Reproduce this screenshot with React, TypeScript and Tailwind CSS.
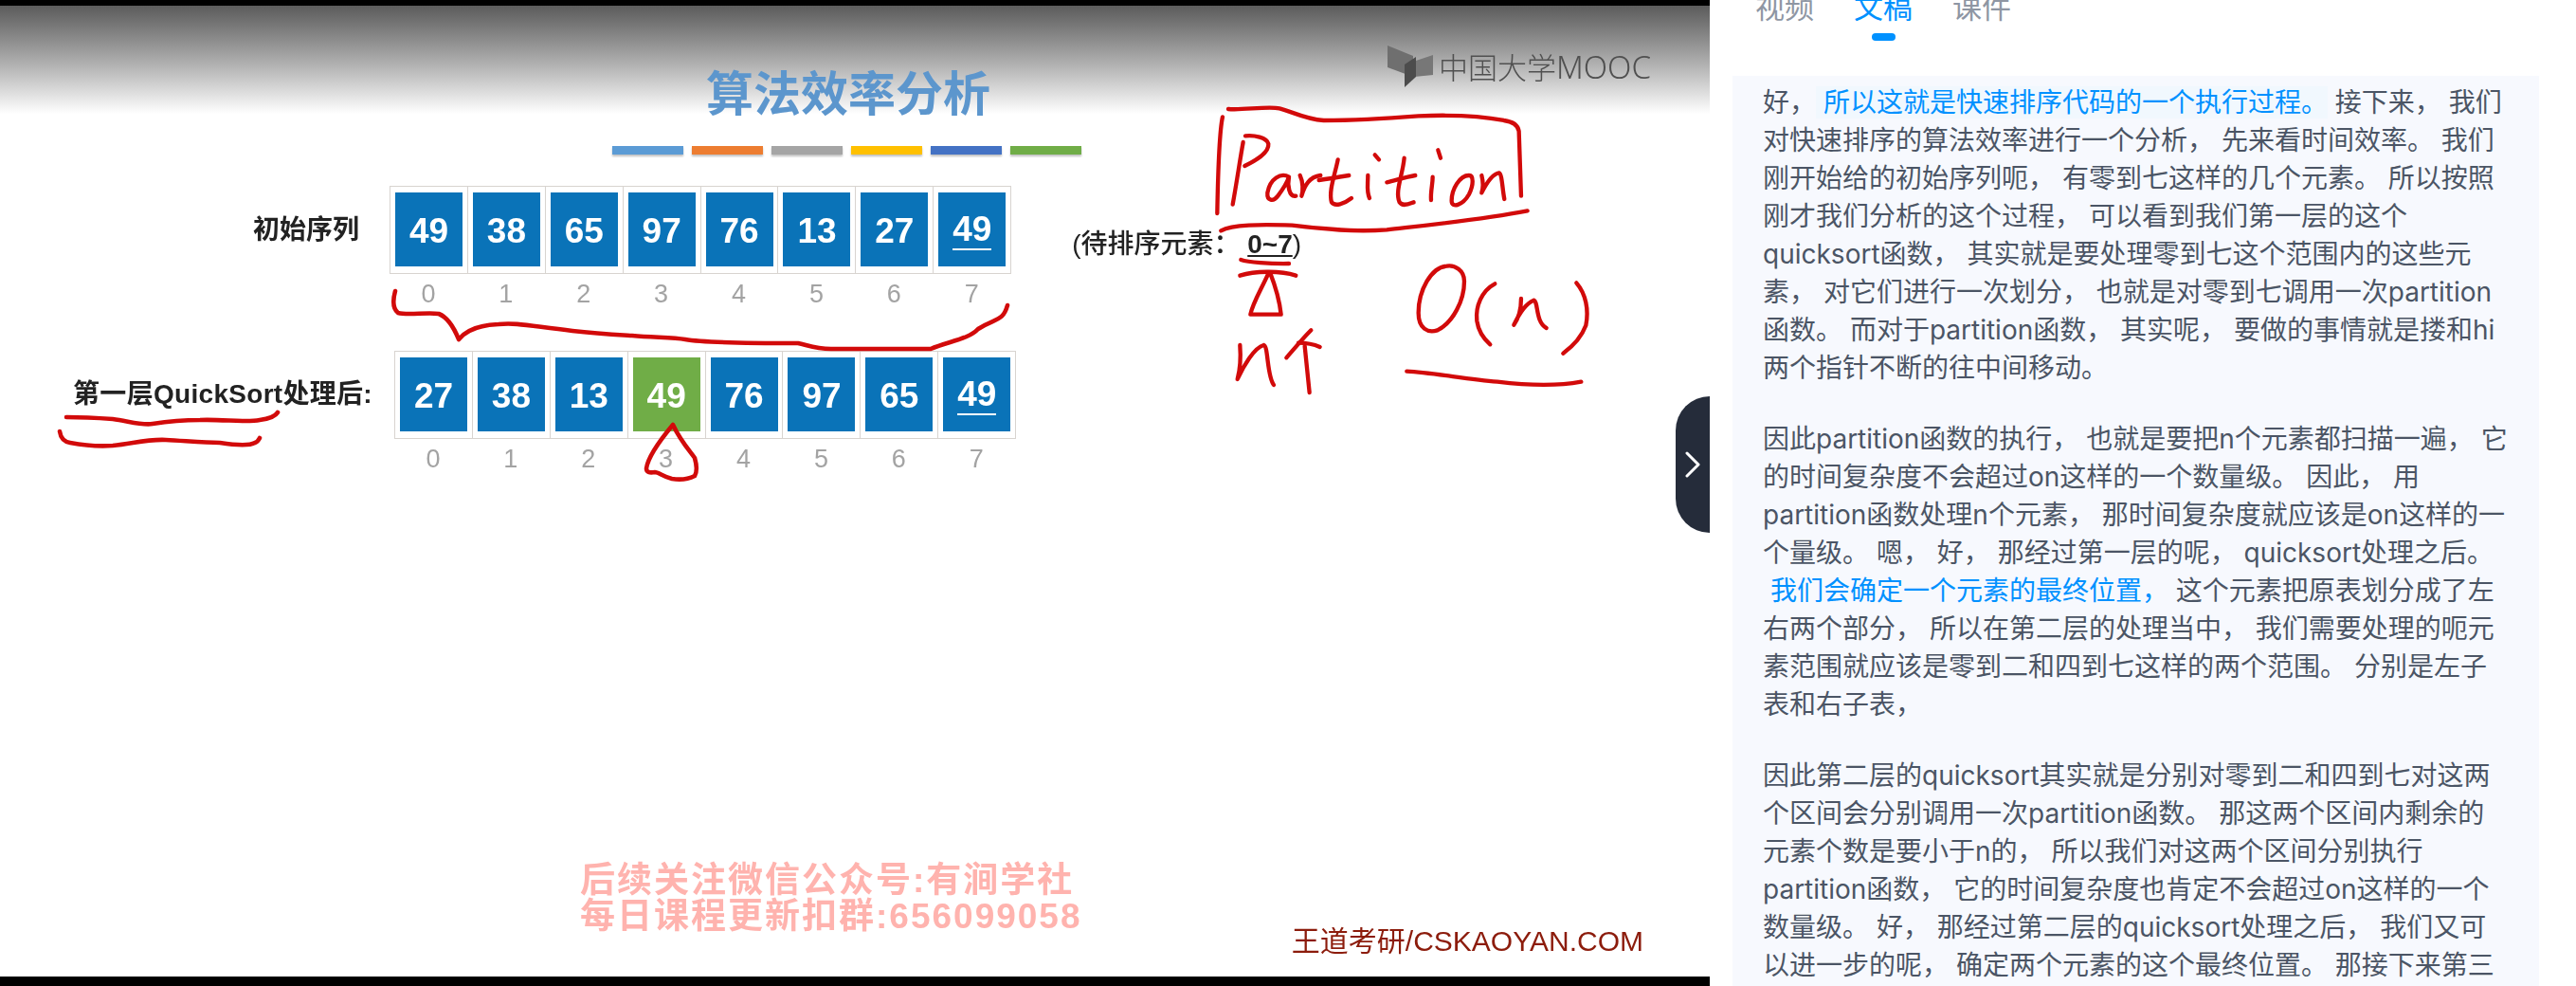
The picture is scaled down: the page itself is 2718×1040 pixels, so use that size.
import { ChevronRight } from "lucide-react";

const barColors = ["bg-[#5b9bd5]", "bg-[#ed7d31]", "bg-[#a5a5a5]", "bg-[#ffc000]", "bg-[#4472c4]", "bg-[#70ad47]"];
const firstRow = ["49", "38", "65", "97", "76", "13", "27", "49"];
const secondRow = ["27", "38", "13", "49", "76", "97", "65", "49"];
const indexes = ["0", "1", "2", "3", "4", "5", "6", "7"];

function ArrayCells({ values, pivot }: { values: string[]; pivot?: number }) {
	return (
		<div className="flex border-y border-l border-[#d8d4d0] bg-white">
			{values.map((value, i) => (
				<div key={i} className="w-[81.9px] h-[91px] pl-[5px] pr-[5px] pt-[6px] pb-[5px] border-r border-[#d8d4d0]">
					<div
						className={`w-[71px] h-[78px] flex items-center justify-center pt-[2px] text-white text-[37px] font-bold leading-none ${
							i === pivot ? "bg-[#70ad47]" : "bg-[#0a73b8]"
						}`}
					>
						<span className={i === 7 ? "border-b-2 border-white pb-[2px]" : ""}>{value}</span>
					</div>
				</div>
			))}
		</div>
	);
}

function IndexRow() {
	return (
		<div className="flex h-[36px] items-center text-[27px] text-[#a3a3a3]">
			{indexes.map((n) => (
				<div key={n} className="w-[81.9px] text-center">
					{n}
				</div>
			))}
		</div>
	);
}

function Annotations() {
	return (
		<svg
			className="absolute left-0 top-0 pointer-events-none"
			width="1804"
			height="1040"
			fill="none"
			stroke="#d20a0a"
			strokeLinecap="round"
			strokeLinejoin="round"
		>
			<g strokeWidth="4.6">
				<path d="M417 307C414 318 415 326 420 330C430 333 450 329 463 331C473 335 480 348 484 358C492 348 505 343 526 342C545 340 560 344 604 349C630 352 650 353 667 354C690 356 710 356 723 358C745 362 800 362 842 362C852 364 860 368 877 368L982 368C1000 360 1022 358 1032 347C1050 335 1058 340 1063 322" />
				<path d="M70 440C90 440 105 441 119 442C135 444 150 449 161 447C180 444 195 443 211 443C235 442 260 446 274 443C282 442 290 440 293 435" />
				<path d="M63 455C64 462 68 466 74 467C90 470 105 471 119 470C140 468 155 463 175 464C195 465 215 467 232 467C245 469 262 471 269 467C272 466 273 464 274 462" />
				<path d="M710 448C718 465 728 476 733 483C735 490 736 497 733 502C725 506 715 506 709 505C700 503 695 498 691 498C685 499 682 498 682 494C684 480 700 460 710 448Z" />
			</g>
			<g transform="translate(1280 105) scale(0.3333)" strokeWidth="13">
				<path d="M48 30C90 35 170 20 210 28C250 38 290 62 350 66C450 66 550 60 650 52C750 48 850 52 920 66C950 70 965 80 968 100L975 305" />
				<path d="M30 55C20 100 15 250 13 360" />
				<path d="M25 415C60 395 150 395 250 398C350 410 450 420 550 412C700 395 850 380 995 352" />
				<path d="M95 135C85 190 75 260 62 332" />
				<path d="M102 115C130 112 170 120 175 140C178 170 130 195 100 210" />
				<path d="M240 245C215 230 180 250 172 295C170 320 190 325 205 305C220 285 235 260 240 245C235 270 240 310 262 305" />
				<path d="M275 240C285 260 285 290 280 305C290 270 305 245 340 240" />
				<path d="M395 190C385 240 365 290 375 325C385 340 415 330 438 312" />
				<path d="M335 255C370 250 400 245 430 240" />
				<path d="M490 240C490 270 485 290 495 312" />
				<path d="M512 175L525 190" />
				<path d="M605 185C600 240 575 290 590 325C600 340 620 330 635 325" />
				<path d="M550 262C580 255 610 245 640 240" />
				<path d="M695 245C695 270 688 290 690 318" />
				<path d="M712 160L720 185" />
				<path d="M810 240C780 240 755 285 755 320C755 345 790 335 810 300C825 270 825 240 810 240" />
				<path d="M850 240C855 260 855 280 850 295C865 265 885 235 905 232C915 235 915 280 922 315" />
			</g>
			<g transform="translate(1280 250) scale(0.3333)" strokeWidth="13">
				<path d="M88 72C110 80 180 85 240 84" />
				<path d="M85 122C130 108 210 105 262 122" />
				<path d="M175 115C150 170 125 210 118 245L215 245C210 200 195 150 180 112" />
				<path d="M85 342C88 380 85 420 77 450C95 410 130 350 160 342C175 345 170 440 192 468" />
				<path d="M232 382C260 350 285 320 310 295" />
				<path d="M270 335C295 335 320 340 338 348" />
				<path d="M290 345C295 390 300 440 305 492" />
				<path d="M740 92C690 95 650 170 650 240C650 290 680 305 710 295C760 270 795 200 795 140C795 105 765 88 740 92" />
				<path d="M892 148C850 170 830 220 835 265C840 300 860 325 877 340" />
				<path d="M975 195C975 230 965 260 952 278C970 240 990 210 1015 200C1030 205 1020 270 1055 288" />
				<path d="M1150 145C1180 180 1190 230 1180 280C1165 320 1140 345 1108 368" />
				<path d="M613 425C700 430 800 450 900 458C1000 470 1100 470 1165 458" />
			</g>
		</svg>
	);
}

function MoocLogo() {
	return (
		<div className="absolute left-[1464px] top-[42px] flex items-start blur-[0.6px]">
			<svg width="52" height="46" viewBox="0 0 52 46">
				<polygon points="0,0 27,11 27,33 0,23" fill="#6f6f6f" />
				<polygon points="18,20 48,10 48,31 18,34" fill="#777777" />
				<polygon points="18,20 30,12 30,33 18,44" fill="#4c4c4c" />
			</svg>
			<span className="ml-[2px] mt-[3px] text-[31px] leading-[40px] font-light text-[#505050] whitespace-nowrap">
				中国大学<span className="font-['Noto_Sans'] text-[33px] font-light">MOOC</span>
			</span>
		</div>
	);
}

function VideoPane() {
	return (
		<div className="relative w-[1804px] h-[1040px] shrink-0 flex flex-col bg-white font-['Liberation_Sans','Noto_Sans_CJK_SC',sans-serif]">
			<div className="h-[6px] bg-black shrink-0" />
			<div className="relative flex-1 overflow-hidden">
				<div className="absolute left-0 top-0 w-full h-[114px] bg-gradient-to-b from-[#5c5c5c] to-white" />
				<MoocLogo />
				<div className="relative blur-[0.5px]">
					<div className="pt-[69px] pl-[745px] text-[50px] leading-[50px] font-bold text-[#5c96cd]">算法效率分析</div>
					<div className="mt-[29px] ml-[646px] flex gap-[9px]">
						{barColors.map((c) => (
							<div key={c} className={`w-[75px] h-[9px] shadow-[0_2px_2px_rgba(0,0,0,0.25)] ${c}`} />
						))}
					</div>
					<div className="mt-[33px] flex">
						<div className="w-[379px] h-[91px] flex items-center justify-end pt-[2px] text-[28px] font-bold text-[#222222]">初始序列</div>
						<div className="ml-[32px]">
							<ArrayCells values={firstRow} />
						</div>
						<div className="ml-[64px] mt-[44px] text-[28px] leading-[36px] font-medium text-[#222222] whitespace-nowrap">
							(待排序元素： <span className="underline font-bold">0~7</span>)
						</div>
					</div>
					<div className="mt-[3px] ml-[411px]">
						<IndexRow />
					</div>
					<div className="mt-[42px] flex">
						<div className="w-[393px] h-[92px] flex items-center justify-end text-[28px] font-bold text-[#222222] tracking-[0.3px] whitespace-nowrap">
							第一层QuickSort处理后:
						</div>
						<div className="ml-[23px]">
							<ArrayCells values={secondRow} pivot={3} />
						</div>
					</div>
					<div className="mt-[3px] ml-[416px]">
						<IndexRow />
					</div>
					<div className="mt-[408px] pl-[612px] pr-[70px] flex justify-between">
						<div className="text-[37px] leading-[38px] font-bold text-[#ffb3ae] tracking-[2px] whitespace-nowrap">
							<div>后续关注微信公众号:有涧学社</div>
							<div>每日课程更新扣群:656099058</div>
						</div>
						<div className="mt-[68px] text-[30px] leading-[30px] text-[#8c1c0c] whitespace-nowrap">王道考研/CSKAOYAN.COM</div>
					</div>
				</div>
			</div>
			<div className="h-[10px] bg-black shrink-0" />
			<Annotations />
			<button className="absolute left-[1768px] top-[418px] w-[36px] h-[144px] rounded-l-[36px] bg-[#252c3a] flex items-center justify-center">
				<ChevronRight className="w-[48px] h-[48px] shrink-0 text-white" strokeWidth={1.5} />
			</button>
		</div>
	);
}

type Line = { text: string; tone?: "blue" | "highlight"; rest?: string; lead?: string };

const paragraphs: Line[][] = [
	[
		{ lead: "好，", text: " 所以这就是快速排序代码的一个执行过程。", tone: "highlight", rest: " 接下来， 我们" },
		{ text: "对快速排序的算法效率进行一个分析， 先来看时间效率。 我们" },
		{ text: "刚开始给的初始序列呃， 有零到七这样的几个元素。 所以按照" },
		{ text: "刚才我们分析的这个过程， 可以看到我们第一层的这个" },
		{ text: "quicksort函数， 其实就是要处理零到七这个范围内的这些元" },
		{ text: "素， 对它们进行一次划分， 也就是对零到七调用一次partition" },
		{ text: "函数。 而对于partition函数， 其实呢， 要做的事情就是搂和hi" },
		{ text: "两个指针不断的往中间移动。" },
	],
	[
		{ text: "因此partition函数的执行， 也就是要把n个元素都扫描一遍， 它" },
		{ text: "的时间复杂度不会超过on这样的一个数量级。 因此， 用" },
		{ text: "partition函数处理n个元素， 那时间复杂度就应该是on这样的一" },
		{ text: "个量级。 嗯， 好， 那经过第一层的呢， quicksort处理之后。" },
		{ text: " 我们会确定一个元素的最终位置，", tone: "blue", rest: " 这个元素把原表划分成了左" },
		{ text: "右两个部分， 所以在第二层的处理当中， 我们需要处理的呃元" },
		{ text: "素范围就应该是零到二和四到七这样的两个范围。 分别是左子" },
		{ text: "表和右子表，" },
	],
	[
		{ text: "因此第二层的quicksort其实就是分别对零到二和四到七对这两" },
		{ text: "个区间会分别调用一次partition函数。 那这两个区间内剩余的" },
		{ text: "元素个数是要小于n的， 所以我们对这两个区间分别执行" },
		{ text: "partition函数， 它的时间复杂度也肯定不会超过on这样的一个" },
		{ text: "数量级。 好， 那经过第二层的quicksort处理之后， 我们又可" },
		{ text: "以进一步的呢， 确定两个元素的这个最终位置。 那接下来第三" },
	],
];

function TranscriptLine({ line }: { line: Line }) {
	return (
		<div className="h-[40px] leading-[40px] whitespace-pre">
			{line.lead}
			<span
				className={
					line.tone === "highlight"
						? "text-[#0091ff] bg-[#f1f8fe]"
						: line.tone === "blue"
							? "text-[#0091ff]"
							: ""
				}
			>
				{line.text}
			</span>
			{line.rest}
		</div>
	);
}

function SidePane() {
	return (
		<div className="flex-1 h-[1040px] overflow-hidden flex flex-col bg-white font-[Inter,'Noto_Sans_CJK_SC',sans-serif]">
			<div className="h-[80px] shrink-0 pl-[48px] flex gap-[42px] text-[31px] leading-[31px] text-[#8e96a3]">
				<div className="-mt-[8px]">视频</div>
				<div className="-mt-[8px] flex flex-col items-center">
					<span className="text-[#0091ff]">文稿</span>
					<div className="mt-[12px] w-[25px] h-[8px] rounded-full bg-[#0091ff]" />
				</div>
				<div className="-mt-[8px]">课件</div>
			</div>
			<div className="ml-[24px] w-[851px] flex-1 overflow-hidden bg-[#f7f9fe] pl-[32px] pt-[8px] text-[28px] text-[#4b5565]">
				<div className="flex flex-col gap-[35px]">
					{paragraphs.map((lines, i) => (
						<div key={i}>
							{lines.map((line, j) => (
								<TranscriptLine key={j} line={line} />
							))}
						</div>
					))}
				</div>
			</div>
		</div>
	);
}

export default function App() {
	return (
		<div className="w-[2718px] h-[1040px] overflow-hidden flex">
			<VideoPane />
			<SidePane />
		</div>
	);
}
